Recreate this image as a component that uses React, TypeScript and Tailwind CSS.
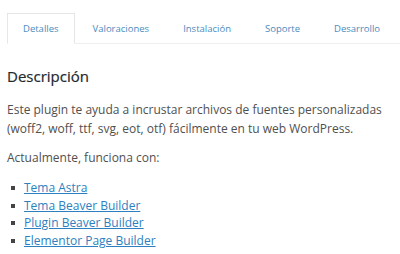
const TABS = ['Detalles', 'Valoraciones', 'Instalación', 'Soporte', 'Desarrollo'];

const LINKS = ['Tema Astra', 'Tema Beaver Builder', 'Plugin Beaver Builder', 'Elementor Page Builder'];

export default function App() {
  return (
    <div
      className="h-[254px] w-[400px] overflow-hidden bg-white pl-[7px] text-[#505050]"
      style={{ fontFamily: '"Open Sans", sans-serif' }}
    >
      <ul className="mt-[13px] flex border-b border-[#eeeeee]">
        {TABS.map((t, i) => (
          <li
            key={t}
            className={`-mb-px mr-[2px] border px-[15px] pb-[7px] pt-[8px] text-[9.5px] leading-[14px] text-[#4b8cc0] ${
              i === 0 ? 'border-[#e6e6e6] border-b-white bg-white' : 'border-transparent'
            }`}
          >
            {t}
          </li>
        ))}
      </ul>

      <h2 className="mt-[22px] text-[15px] font-normal leading-[20px] text-[#23282d] [-webkit-text-stroke:0.2px_#23282d]">
        Descripción
      </h2>

      <p className="mt-[14px] text-[12px] leading-[19px]">
        Este plugin te ayuda a incrustar archivos de fuentes personalizadas (woff2, woff, ttf, svg, eot, otf)
        fácilmente en tu web WordPress.
      </p>

      <p className="mt-[10px] text-[12px] leading-[19px]">Actualmente, funciona con:</p>

      <ul className="mt-[12px] pl-[4px] text-[12px] leading-[17.7px]">
        {LINKS.map((l) => (
          <li key={l} className="flex items-center">
            <span className="mr-[9px] inline-block size-[4px] bg-[#444]" />
            <a href="#" className="text-[#2d7fbf] underline">
              {l}
            </a>
          </li>
        ))}
      </ul>
    </div>
  );
}
